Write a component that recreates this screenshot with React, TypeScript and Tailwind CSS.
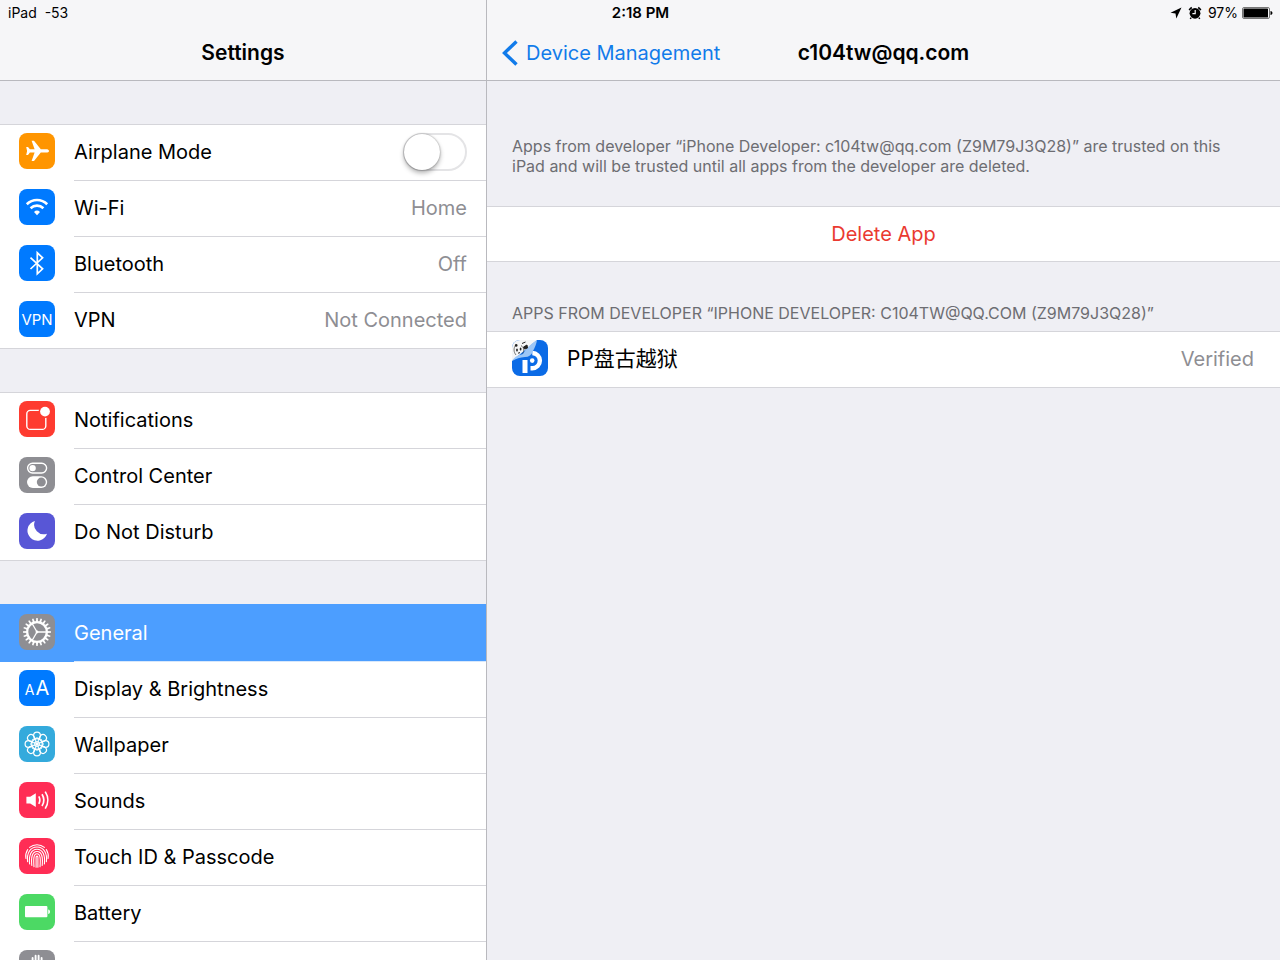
import { ReactNode, useState } from "react";
import clsx from "clsx";

type Item = {
  label: string;
  tile: string;
  icon: ReactNode;
  value?: string;
  toggle?: boolean;
  selected?: boolean;
};

const spokes = (count: number) =>
  Array.from({ length: count }, (_, i) => (i * 360) / count);

function Glyph({ children }: { children: ReactNode }) {
  return (
    <svg viewBox="0 0 36 36" className="size-9" fill="none" aria-hidden="true">
      {children}
    </svg>
  );
}

const airplaneIcon = (
  <Glyph>
    <path
      fill="#fff"
      d="M30 17.9c0-1-1.3-1.6-2.8-1.6h-5.4L15 7.8h-2.4l3 8.5h-4.7L9 13.9H7.2l.9 4-.9 4H9l1.9-2.4h4.7l-3 8.5H15l6.8-8.5h5.4c1.5 0 2.8-.6 2.8-1.6z"
    />
  </Glyph>
);

const wifiIcon = (
  <Glyph>
    <path d="M7.8 15.2a14.6 14.6 0 0 1 20.4 0" stroke="#fff" strokeWidth="2.6" />
    <path d="M11.6 19.2a9.2 9.2 0 0 1 12.8 0" stroke="#fff" strokeWidth="2.6" />
    <path d="M18 26.2l-3-3.2a4.3 4.3 0 0 1 6 0z" fill="#fff" />
  </Glyph>
);

const bluetoothIcon = (
  <Glyph>
    <path
      d="M11.5 12.6 23.6 23.8 18.3 28.8V7.8l5.3 5L11.5 24"
      stroke="#fff"
      strokeWidth="1.7"
    />
  </Glyph>
);

const notificationsIcon = (
  <Glyph>
    <rect x="7.8" y="9.4" width="19" height="19" rx="3.5" stroke="#fff" strokeWidth="1.4" />
    <circle cx="26" cy="10.6" r="6.4" fill="#fe3b30" />
    <circle cx="26" cy="10.6" r="4.9" fill="#fff" />
  </Glyph>
);

const controlCenterIcon = (
  <Glyph>
    <rect x="8.6" y="6.2" width="19" height="9.8" rx="4.9" stroke="#fff" strokeWidth="1.4" />
    <circle cx="13.6" cy="11.1" r="3.2" fill="#fff" />
    <rect x="8" y="19.3" width="20.2" height="11.6" rx="5.8" fill="#fff" />
    <circle cx="22.3" cy="25.1" r="4.5" fill="#8e8e93" />
  </Glyph>
);

const moonIcon = (
  <Glyph>
    <path fill="#fff" d="M15.9 8A10 10 0 1 0 28 20.7 9.6 9.6 0 0 1 15.9 8z" />
  </Glyph>
);

const gearIcon = (
  <Glyph>
    <circle cx="18" cy="18" r="9.8" stroke="#fff" strokeWidth="2.2" />
    {spokes(20).map((deg) => (
      <path
        key={deg}
        d="M16.900 8.200l.4-4.200h1.400l.4 4.200z"
        fill="#fff"
        transform={`rotate(${deg} 18 18)`}
      />
    ))}
    {spokes(3).map((deg) => (
      <path
        key={deg}
        d="M18 18h9.5"
        stroke="#fff"
        strokeWidth="1.3"
        transform={`rotate(${deg} 18 18)`}
      />
    ))}
    <circle cx="18" cy="18" r="1.4" fill="#fff" />
  </Glyph>
);

const wallpaperIcon = (
  <Glyph>
    {spokes(8).map((deg) => (
      <g key={deg} transform={`rotate(${deg} 18 18)`} stroke="#fff">
        <circle cx="18" cy="9.5" r="3.4" strokeWidth="1.2" />
        <ellipse cx="18" cy="14.6" rx="1.7" ry="3" strokeWidth="0.9" />
      </g>
    ))}
  </Glyph>
);

const soundsIcon = (
  <Glyph>
    <path fill="#fff" d="M7.4 14.8h3.8l5.6-3.5v13.6l-5.6-3.5H7.4z" />
    <path
      d="M19.8 14.4a7.4 7.4 0 0 1 0 7.4M23 12.2a11 11 0 0 1 0 11.8M26.200 9.6a15.4 15.4 0 0 1 0 17"
      stroke="#fff"
      strokeWidth="1.7"
    />
  </Glyph>
);

const touchIdIcon = (
  <Glyph>
    <g stroke="#fff" strokeWidth="1.1" strokeLinecap="round">
      <path d="M10.6 9.4a11.6 11.6 0 0 1 14.8 0" />
      <path d="M6.9 20.5c-.6-3.4 0-6.2 1.8-9M29.1 20.5c.6-3.4 0-6.2-1.8-9" />
      <path d="M8.6 23.8C7.6 15.4 11 9 18 9s10.4 6.4 9.4 14.8" />
      <path d="M10.6 26C9.6 17.5 12 11.2 18 11.2S26.4 17.5 25.4 26" />
      <path d="M12.8 27.5c-.8-8 .2-14 5.2-14s6 6 5.2 14" />
      <path d="M15 28.6c-.6-7-.6-12.8 3-12.8s3.6 5.8 3 12.8" />
      <path d="M17.1 29.2v-10c0-1.4 1.8-1.4 1.8 0v10" />
    </g>
  </Glyph>
);

const batteryIcon = (
  <Glyph>
    <rect x="6" y="12" width="22.4" height="11.3" rx="1" fill="#fff" />
    <path d="M29.2 15.4c2.4.6 2.4 3.9 0 4.5z" fill="#fff" />
  </Glyph>
);

const privacyIcon = (
  <Glyph>
    <path
      d="M13.6 18V8M16.6 18V5.8M19.6 18V5.8M22.6 18V8"
      stroke="#fff"
      strokeWidth="1.9"
      strokeLinecap="round"
    />
    <path d="M12.7 16h10.8v6c0 4-2 7-5.4 7-3 0-4.4-1.6-5.4-4z" fill="#fff" />
  </Glyph>
);

const GROUPS: Item[][] = [
  [
    { label: "Airplane Mode", tile: "bg-[#ff9500]", icon: airplaneIcon, toggle: true },
    { label: "Wi-Fi", tile: "bg-[#007aff]", icon: wifiIcon, value: "Home" },
    { label: "Bluetooth", tile: "bg-[#007aff]", icon: bluetoothIcon, value: "Off" },
    {
      label: "VPN",
      tile: "bg-[#007aff]",
      icon: <span className="text-[15px] text-white">VPN</span>,
      value: "Not Connected",
    },
  ],
  [
    { label: "Notifications", tile: "bg-[#fe3b30]", icon: notificationsIcon },
    { label: "Control Center", tile: "bg-[#8e8e93]", icon: controlCenterIcon },
    { label: "Do Not Disturb", tile: "bg-[#5856d6]", icon: moonIcon },
  ],
  [
    { label: "General", tile: "bg-[#8e8e93]", icon: gearIcon, selected: true },
    {
      label: "Display & Brightness",
      tile: "bg-[#007aff]",
      icon: (
        <span className="flex items-baseline gap-px text-white">
          <span className="text-sm">A</span>
          <span className="text-xl">A</span>
        </span>
      ),
    },
    { label: "Wallpaper", tile: "bg-[#34aadc]", icon: wallpaperIcon },
    { label: "Sounds", tile: "bg-[#ff2d55]", icon: soundsIcon },
    { label: "Touch ID & Passcode", tile: "bg-[#ff2d55]", icon: touchIdIcon },
    { label: "Battery", tile: "bg-[#4cd964]", icon: batteryIcon },
    { label: "Privacy", tile: "bg-[#8e8e93]", icon: privacyIcon },
  ],
];

function Tile({ item }: { item: Item }) {
  return (
    <span
      aria-hidden="true"
      className={clsx(
        "flex size-9 shrink-0 items-center justify-center overflow-hidden rounded-lg",
        item.tile
      )}
    >
      {item.icon}
    </span>
  );
}

function SettingsRow({ item, last }: { item: Item; last: boolean }) {
  const [on, setOn] = useState(false);

  const rowClass = clsx(
    "flex pl-[19px]",
    item.selected ? "-mt-px h-[58px] bg-[#4c9eff] pt-2.5 text-white" : "h-14 pt-2",
    last && "border-b border-[#d5d5da]"
  );

  const body = (
    <>
      <Tile item={item} />
      <span
        className={clsx(
          "ml-[19px] flex flex-1 items-start justify-between pr-[19px] leading-[38px]",
          !last && "border-b",
          item.selected ? "border-[#d8e8fb]" : "border-[#d5d5da]"
        )}
      >
        <span>{item.label}</span>
        {item.value && <span className="text-[#8e8e93]">{item.value}</span>}
        {item.toggle && (
          <input
            type="checkbox"
            role="switch"
            checked={on}
            onChange={(e) => setOn(e.target.checked)}
            className="flex h-[38px] w-16 appearance-none items-center rounded-full border-2 border-[#e4e4e6] bg-white before:-ml-px before:size-9 before:rounded-full before:bg-white before:shadow-[0_3px_5px_rgba(0,0,0,0.3),0_0_2px_rgba(0,0,0,0.4)] before:transition-transform checked:border-[#4cd964] checked:bg-[#4cd964] checked:before:translate-x-[26px]"
          />
        )}
      </span>
    </>
  );

  if (item.toggle) return <label className={rowClass}>{body}</label>;

  return (
    <a
      href={`#${item.label}`}
      aria-current={item.selected ? "page" : undefined}
      className={rowClass}
    >
      {body}
    </a>
  );
}

function StatusBar() {
  return (
    <div className="absolute inset-x-0 top-0 grid h-[26px] grid-cols-3 items-center pr-[7px] pl-2 text-sm">
      <span className="whitespace-pre">iPad  -53</span>
      <span className="text-center text-[15px] font-semibold">2:18 PM</span>
      <span className="flex items-center justify-end">
        <svg viewBox="0 0 12 12" className="mr-1.5 size-3" aria-hidden="true">
          <path d="M11.5.5.5 5.8l5 .7.8 5z" />
        </svg>
        <svg viewBox="0 0 14 14" className="mr-1.5 size-3.5" aria-hidden="true">
          <circle cx="7" cy="7.3" r="5.4" />
          <path
            d="M1.2 4.2a8 8 0 0 1 2.6-2.7M12.8 4.2a8 8 0 0 0-2.6-2.7M3.2 11.6l-1 1.3M10.8 11.6l1 1.3"
            stroke="#000"
            strokeWidth="1.5"
            fill="none"
          />
          <path d="M7.2 4v3.6H4.4" stroke="#f6f6f8" strokeWidth="1.2" fill="none" />
        </svg>
        <span>97%</span>
        <svg viewBox="0 0 31 12" className="ml-1 h-3 w-[31px]" aria-hidden="true">
          <rect x=".5" y=".5" width="27" height="11" rx="1.5" fill="none" stroke="#777" />
          <rect x="1.5" y="1.5" width="24.5" height="9" rx=".5" />
          <path d="M28.5 4c2.6.3 2.6 3.7 0 4z" />
        </svg>
      </span>
    </div>
  );
}

function DeveloperAppIcon() {
  return (
    <svg viewBox="0 0 36 36" className="size-9 shrink-0" aria-hidden="true">
      <clipPath id="app-tile">
        <rect width="36" height="36" rx="8" />
      </clipPath>
      <g clipPath="url(#app-tile)">
        <rect width="36" height="36" fill="#0b6be6" />
        <path d="M13 33V20" stroke="#fff" strokeWidth="5" fill="none" />
        <path
          d="M18.500 28.200h1.800a7.600 7.600 0 0 0 0-15.200"
          stroke="#fff"
          strokeWidth="4.400"
          fill="none"
        />
        <circle cx="20.200" cy="20.600" r="2.300" fill="#fff" />
        <path d="M0 0h25L0 21z" fill="#f5f6f7" />
        <path
          d="M25 0c-.5 4-2 7-4 11-1.500 4-4 6-8 6-5 .5-9 1.500-13 4C3 16 7 15 11 14c3-6 8-10 14-14z"
          fill="#9cc6f6"
        />
        <path d="M3.500 5.500C1.500 8 1.500 12 4 15M9 5.500c3 2 3.500 5 1.500 8" stroke="#555" strokeWidth=".8" fill="none" />
        <circle cx="4.200" cy="5.400" r="1.300" fill="#222" />
        <path d="M10 3.500l3.500-1.500M11.500 7l3.500-2 .5 3-3 1z" stroke="#222" strokeWidth="1" fill="#222" />
        <ellipse cx="5" cy="10" rx=".9" ry="1.500" fill="#222" />
        <ellipse cx="8.600" cy="9" rx=".9" ry="1.500" fill="#222" />
        <path d="M6 13.200l2-.6" stroke="#222" />
      </g>
    </svg>
  );
}

export default function App() {
  return (
    <div className="relative grid h-screen grid-cols-[487fr_793fr] overflow-hidden bg-[#efeff4] font-['Inter','Noto_Sans_CJK_SC',sans-serif] text-xl text-black">
      <aside className="flex min-h-0 min-w-0 flex-col border-r border-[#b9b9be]">
        <header className="flex h-[81px] shrink-0 items-end justify-center border-b border-[#b9b9be] bg-[#f6f6f8] pb-[11px]">
          <h1 className="text-[21px] leading-8 font-semibold">Settings</h1>
        </header>
        <nav className="flex flex-1 flex-col gap-[43px] overflow-y-auto pt-[43px] [scrollbar-width:none]">
          {GROUPS.map((group, i) => (
            <div key={i} className="shrink-0 border-t border-[#d5d5da] bg-white">
              {group.map((item, j) => (
                <SettingsRow key={item.label} item={item} last={j === group.length - 1} />
              ))}
            </div>
          ))}
        </nav>
      </aside>

      <main className="flex min-h-0 min-w-0 flex-col">
        <header className="grid h-[81px] shrink-0 grid-cols-[1fr_auto_1fr] items-end border-b border-[#b9b9be] bg-[#f6f6f8] pb-[11px] leading-8">
          <a href="#device-management" className="flex items-center pl-[15px] text-[#117bea]">
            <svg viewBox="0 0 16 26" className="mr-2 h-[26px] w-4" fill="none" aria-hidden="true">
              <path d="M14.5 1.5 2.5 13l12 11.5" stroke="currentColor" strokeWidth="3.4" />
            </svg>
            Device Management
          </a>
          <h2 className="text-[21px] leading-8 font-semibold">c104tw@qq.com</h2>
        </header>

        <p className="px-[25px] pt-[55px] pb-[30px] text-base leading-5 text-[#6d6d72]">
          Apps from developer “iPhone Developer: c104tw@qq.com (Z9M79J3Q28)” are trusted on this
          iPad and will be trusted until all apps from the developer are deleted.
        </p>
        <button
          type="button"
          className="h-14 shrink-0 border-y border-[#d5d5da] bg-white text-[#ea3a30]"
        >
          Delete App
        </button>

        <h3 className="px-[25px] pt-[41px] pb-2 text-base leading-5 text-[#6d6d72] uppercase">
          Apps from developer “iPhone Developer: c104tw@qq.com (Z9M79J3Q28)”
        </h3>
        <div className="flex h-[57px] shrink-0 items-start border-y border-[#d5d5da] bg-white pt-2 pr-[26px] pl-[25px] leading-[38px]">
          <DeveloperAppIcon />
          <span className="ml-[19px] flex-1 text-[21px]">PP盘古越狱</span>
          <span className="text-[#8e8e93]">Verified</span>
        </div>
      </main>

      <StatusBar />
    </div>
  );
}
